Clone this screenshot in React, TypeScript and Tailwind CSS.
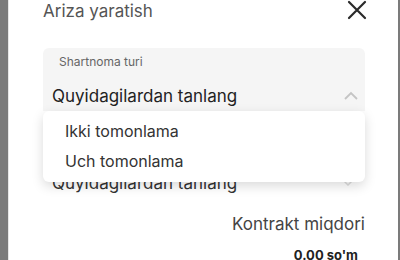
import React from "react";

export default function App() {
  return (
    <div
      className="flex w-[400px] h-[260px] overflow-hidden bg-[#7b7b7b]"
      style={{ fontFamily: "Inter, 'Open Sans', sans-serif" }}
    >
      <div className="w-[8px] shrink-0 bg-[#7b7b7b]" />
      <div className="relative flex-1 bg-white border-l border-[#e6e6e6] pl-[34px] pr-[33px] flex flex-col">
        {/* header */}
        <div className="flex items-center justify-between h-[22px]">
          <span className="text-[17px] leading-[22px] text-[#555]">Ariza yaratish</span>
          <svg width="20" height="20" viewBox="0 0 20 20" className="-mr-[2px] -mt-[2px]">
            <path d="M2 2 L18 18 M18 2 L2 18" stroke="#2a2a2a" strokeWidth="2.2" strokeLinecap="round" />
          </svg>
        </div>

        {/* select 1 */}
        <div className="mt-[26px] h-[63px] bg-[#f5f5f5] rounded-t-md pt-[6px] pb-[4px] pr-[6px]">
          <div className="pl-[16px] text-[12px] leading-[16px] text-[#666]">Shartnoma turi</div>
          <div className="mt-[15px] flex items-center justify-between pl-[9px]">
            <span className="text-[17px] leading-[22px] text-[#222]">Quyidagilardan tanlang</span>
            <svg width="16" height="10" viewBox="0 0 16 10">
              <path d="M2 8 L8 2 L14 8" fill="none" stroke="#c4c4c4" strokeWidth="1.8" />
            </svg>
          </div>
        </div>

        {/* select 2 (behind menu) */}
        <div className="mt-[10px] pt-[52px] pl-[9px] pr-[12px] flex items-center justify-between">
          <span className="text-[17px] leading-[20px] text-[#333]">Quyidagilardan tanlang</span>
          <svg width="10" height="6" viewBox="0 0 10 6">
            <path d="M1 1 L5 5 L9 1" fill="none" stroke="#ddd" strokeWidth="1.5" />
          </svg>
        </div>

        <div className="mt-[21px] text-right text-[17px] leading-[20px] text-[#444]">Kontrakt miqdori</div>
        <div className="mt-[11px] text-right pr-[7px] text-[13px] leading-[20px] font-bold text-[#222]">0.00 so'm</div>

        {/* dropdown menu */}
        <div className="absolute left-[34px] right-[33px] top-[111px] h-[71px] bg-white rounded-md shadow-[0_4px_12px_rgba(0,0,0,0.15)] pt-[5px]">
          <div className="h-[30px] flex items-center pl-[22px] text-[16px] text-[#333]">Ikki tomonlama</div>
          <div className="h-[30px] flex items-center pl-[22px] text-[16px] text-[#333]">Uch tomonlama</div>
        </div>
      </div>
      <div className="w-[2px] shrink-0 bg-[#7b7b7b]" />
    </div>
  );
}
